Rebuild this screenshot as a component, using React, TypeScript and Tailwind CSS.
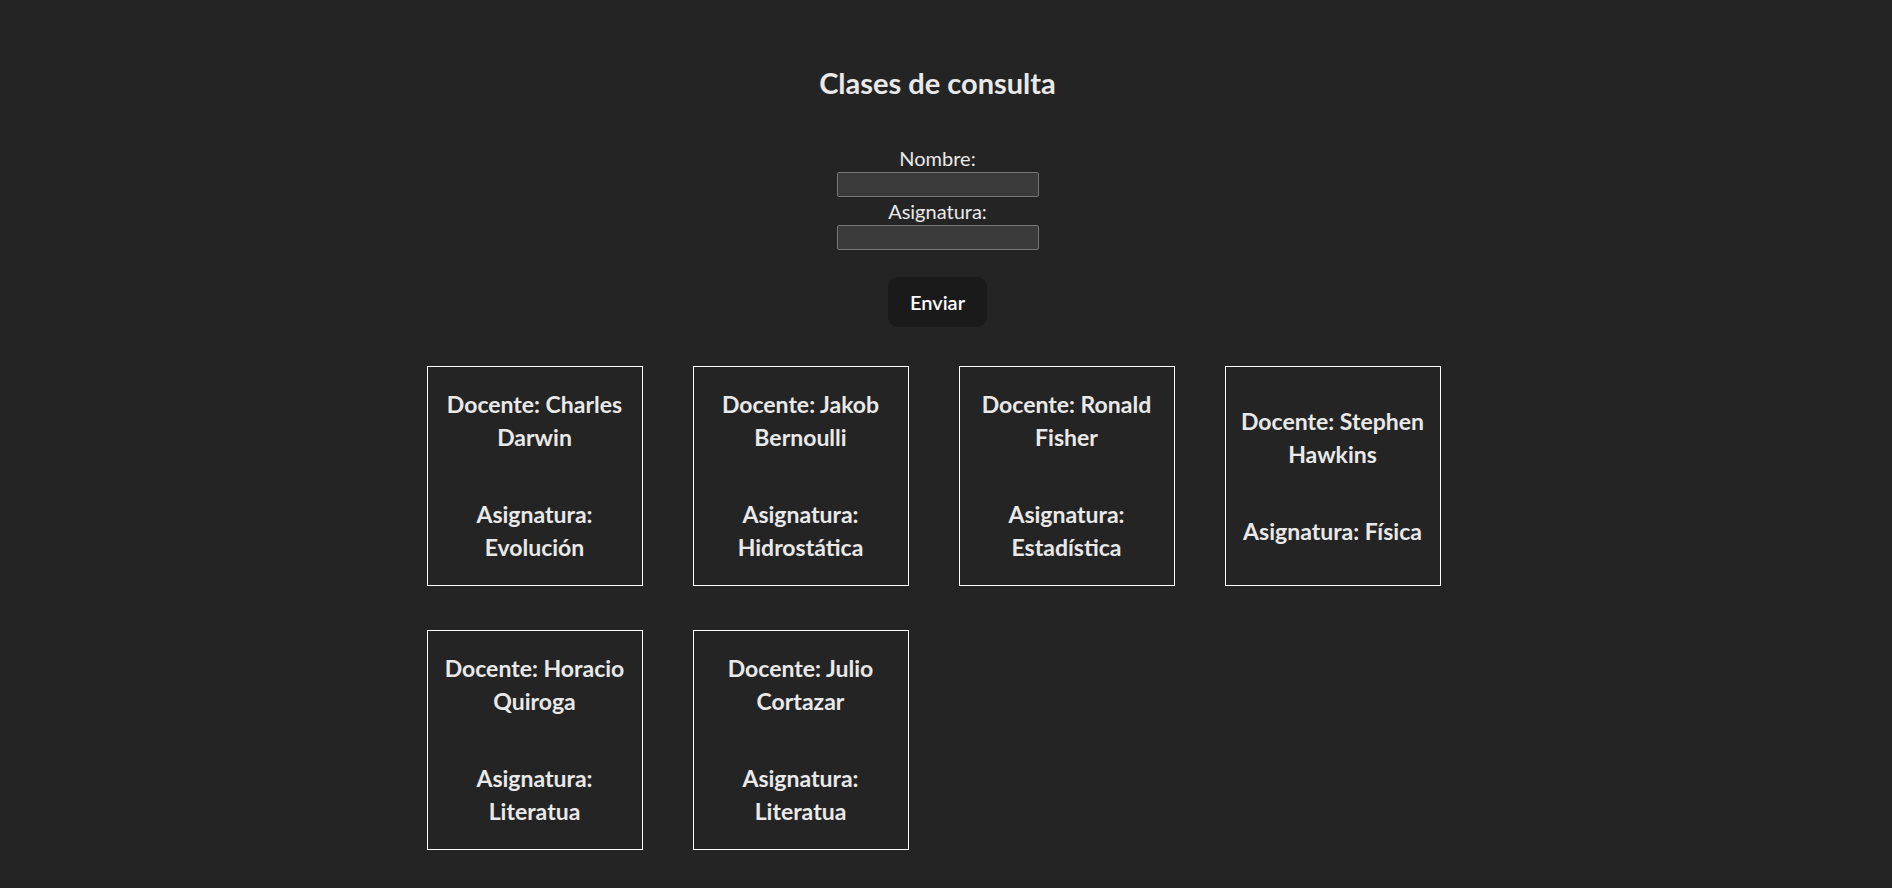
import { useState } from "react";

interface Clase {
  id: number;
  docente: string;
  asignatura: string;
}

const clases: Clase[] = [
  { id: 1, docente: "Charles Darwin", asignatura: "Evolución" },
  { id: 2, docente: "Jakob Bernoulli", asignatura: "Hidrostática" },
  { id: 3, docente: "Ronald Fisher", asignatura: "Estadística" },
  { id: 4, docente: "Stephen Hawkins", asignatura: "Física" },
  { id: 5, docente: "Horacio Quiroga", asignatura: "Literatua" },
  { id: 6, docente: "Julio Cortazar", asignatura: "Literatua" },
];

export default function App() {
  const [nombre, setNombre] = useState("");
  const [asignatura, setAsignatura] = useState("");

  return (
    <div className="min-h-screen bg-[#242424] pr-[17px] text-white/90 font-['Lato',_'Noto_Sans',_sans-serif]">
      <div className="flex flex-col items-center pt-[63px] pb-10">
        {/* Header */}
        <h2 className="text-[29px] leading-[40px] font-bold">Clases de consulta</h2>

        {/* Form */}
        <form
          className="mt-[41px] flex flex-col items-center"
          onSubmit={(e) => e.preventDefault()}
        >
          <label htmlFor="nombre" className="text-[20px] leading-[28px]">
            Nombre:
          </label>
          <input
            id="nombre"
            value={nombre}
            onChange={(e) => setNombre(e.target.value)}
            className="w-[202px] h-[25px] bg-[#3b3b3b] border border-[#767676] rounded-[2px] outline-none px-1 text-[16px]"
          />
          <label htmlFor="asignatura" className="text-[20px] leading-[28px]">
            Asignatura:
          </label>
          <input
            id="asignatura"
            value={asignatura}
            onChange={(e) => setAsignatura(e.target.value)}
            className="w-[202px] h-[25px] bg-[#3b3b3b] border border-[#767676] rounded-[2px] outline-none px-1 text-[16px]"
          />
          <button
            type="submit"
            className="mt-[27px] w-[99px] h-[50px] flex items-center justify-center rounded-[10px] bg-[#1a1a1a] text-white text-[20px] font-semibold"
          >
            Enviar
          </button>
        </form>

        {/* Cards */}
        <div className="mt-[39px] w-full flex justify-center">
          <div className="mr-[8px] grid grid-cols-[repeat(4,216px)] gap-x-[50px] gap-y-[44px]">
            {clases.map((clase) => (
              <article
                key={clase.id}
                className="w-[216px] h-[220px] border border-white flex flex-col items-center justify-center gap-[44px] px-[14px] text-center text-[23px] leading-[33px] font-bold"
              >
                <h3>{`Docente: ${clase.docente}`}</h3>
                <h3>{`Asignatura: ${clase.asignatura}`}</h3>
              </article>
            ))}
          </div>
        </div>
      </div>
    </div>
  );
}
